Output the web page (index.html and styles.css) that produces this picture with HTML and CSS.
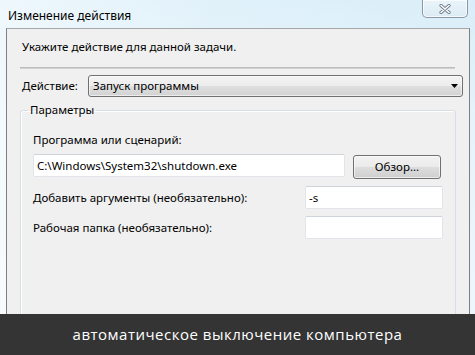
FILE: index.html
```html
<!DOCTYPE html>
<html lang="ru">
<head>
    <meta charset="UTF-8">
    <title>Изменение действия</title>
    <link rel="stylesheet" href="styles.css">
</head>
<body>
    <div class="window">
        <div class="titlebar">
            <span class="title">Изменение действия</span>
            <button type="button" class="close-btn" aria-label="Закрыть">
                <svg width="12" height="10" viewBox="0 0 12 10">
                    <path d="M2 1.5 L10 8.5 M10 1.5 L2 8.5" stroke="#6d7a86" stroke-width="3.2" stroke-linecap="round"/>
                    <path d="M2 1.5 L10 8.5 M10 1.5 L2 8.5" stroke="#ffffff" stroke-width="1.6" stroke-linecap="round"/>
                </svg>
            </button>
        </div>

        <div class="client">
            <p class="hint">Укажите действие для данной задачи.</p>
            <div class="separator"></div>

            <div class="action-row">
                <label class="action-label">Действие:</label>
                <div class="combo">
                    <span>Запуск программы</span>
                    <svg width="7" height="4" viewBox="0 0 7 4"><path d="M0 0 H7 L3.5 4 Z" fill="#000"/></svg>
                </div>
            </div>

            <fieldset class="group">
                <legend>Параметры</legend>
                <label class="field-label" for="program">Программа или сценарий:</label>
                <div class="program-row">
                    <input type="text" id="program" class="textbox textbox-wide" value="C:\Windows\System32\shutdown.exe">
                    <button type="button" class="btn">Обзор...</button>
                </div>
                <div class="opt-row">
                    <label for="args">Добавить аргументы (необязательно):</label>
                    <input type="text" id="args" class="textbox textbox-short" value="-s">
                </div>
                <div class="opt-row">
                    <label for="workdir">Рабочая папка (необязательно):</label>
                    <input type="text" id="workdir" class="textbox textbox-short">
                </div>
            </fieldset>
        </div>
    </div>

    <div class="caption">автоматическое выключение компьютера</div>
</body>
</html>
```

FILE: styles.css
```css
/* Base */
* {
    margin: 0;
    padding: 0;
    box-sizing: border-box;
}

body {
    width: 475px;
    height: 355px;
    overflow: hidden;
    font-family: 'Noto Sans', 'Open Sans', sans-serif;
    font-size: 11.5px;
    line-height: 16px;
    color: #000;
    background: #ffffff;
}

/* Window frame */
.window {
    height: 314px;
    overflow: hidden;
    display: flex;
    flex-direction: column;
    padding: 0 5px 0 6px;
    background:
        linear-gradient(to right, rgba(255, 255, 255, 0.55) 0%, rgba(255, 255, 255, 0.2) 45%, rgba(255, 255, 255, 0) 100%),
        linear-gradient(to bottom, #d9eef9 0%, #e6f3fa 40%, #eef6fb 100%);
}

.titlebar {
    height: 28px;
    flex-shrink: 0;
    display: flex;
    align-items: flex-start;
    justify-content: space-between;
    padding-left: 2px;
}

.title {
    margin-top: 8px;
    font-size: 12px;
}

.close-btn {
    width: 46px;
    height: 18px;
    margin-right: 2px;
    display: flex;
    align-items: center;
    justify-content: center;
    border: 1px solid #8a98a6;
    border-top: none;
    border-radius: 0 0 5px 5px;
    background: linear-gradient(to bottom, #eaf4fa 0%, #dcebf4 100%);
    box-shadow: inset 0 0 0 1px rgba(255, 255, 255, 0.7);
}

/* Client area */
.client {
    flex: 1;
    overflow: hidden;
    background: #f0f0f0;
    border: 1px solid #7d7f82;
    border-top-color: #a4a7aa;
    border-bottom: none;
    padding: 10px 6px 0 13px;
}

.hint {
    padding-left: 2px;
}

.separator {
    margin: 12px 8px 0 0;
    border-top: 1px solid #bcbcbc;
    border-bottom: 1px solid #d2d2d2;
}

.action-row {
    display: flex;
    align-items: center;
    margin-top: 6px;
}

.action-label {
    width: 68px;
    padding-left: 2px;
}

.combo {
    flex: 1;
    height: 22px;
    display: flex;
    align-items: center;
    justify-content: space-between;
    padding: 0 4px 0 4px;
    border: 1px solid #707070;
    border-radius: 3px;
    background: linear-gradient(to bottom, #f4f4f4 0%, #ececec 48%, #dfdfdf 52%, #d2d2d2 100%);
    box-shadow: inset 0 0 0 1px rgba(255, 255, 255, 0.6);
}

/* Group box */
.group {
    margin: 5px 7px 0 0;
    min-height: 260px;
    padding: 14px 12px 0 12px;
    border: 1px solid #d5dfe5;
    border-radius: 3px;
    box-shadow: inset 1px 1px 0 #ffffff;
}

.group legend {
    margin-left: -5px;
    padding: 0 2px;
}

.field-label {
    display: block;
    margin-bottom: 6px;
}

.program-row {
    display: flex;
    align-items: flex-start;
    gap: 8px;
}

.opt-row {
    display: flex;
    align-items: center;
    justify-content: space-between;
    margin-top: 7px;
}

.textbox {
    height: 23px;
    padding: 0 3px;
    font: inherit;
    color: #000;
    background: #ffffff;
    border: 1px solid #e1e5ea;
    border-top-color: #cfd4db;
    border-radius: 2px;
    outline: none;
}

.textbox-wide {
    width: 312px;
}

.textbox-short {
    width: 138px;
}

.btn {
    width: 88px;
    height: 24px;
    margin-top: 1px;
    font: inherit;
    color: #000;
    border: 1px solid #707070;
    border-radius: 3px;
    background: linear-gradient(to bottom, #f2f2f2 0%, #ebebeb 48%, #dddddd 52%, #cfcfcf 100%);
    box-shadow: inset 0 0 0 1px rgba(255, 255, 255, 0.6);
}

/* Caption bar */
.caption {
    height: 41px;
    line-height: 40px;
    text-align: center;
    background: #343434;
    color: #ffffff;
    font-family: 'Open Sans', 'Noto Sans', sans-serif;
    font-size: 15px;
    letter-spacing: 0.5px;
}
```
